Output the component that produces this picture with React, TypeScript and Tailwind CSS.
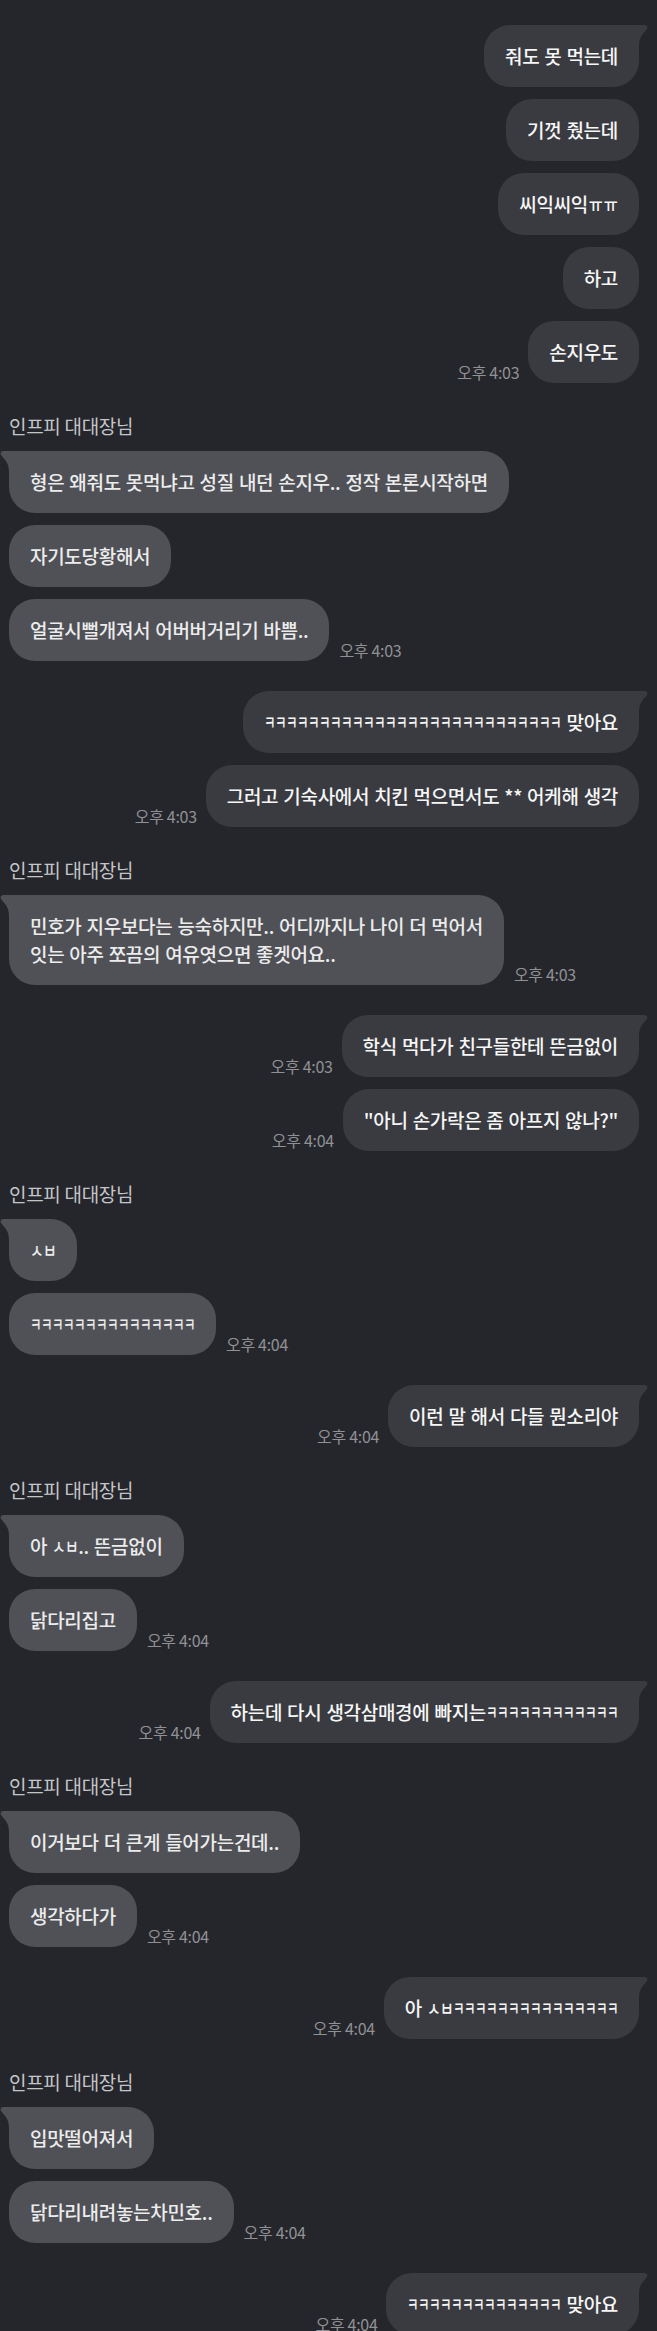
import React from "react";

type Msg = { text: string; time?: string };
type Group = { side: "left" | "right"; msgs: Msg[] };

const K = (n: number) => "ㅋ".repeat(n);

const groups: Group[] = [
  {
    side: "right",
    msgs: [
      { text: "줘도 못 먹는데" },
      { text: "기껏 줬는데" },
      { text: "씨익씨익ㅠㅠ" },
      { text: "하고" },
      { text: "손지우도", time: "오후 4:03" },
    ],
  },
  {
    side: "left",
    msgs: [
      { text: "형은 왜줘도 못먹냐고 성질 내던 손지우.. 정작 본론시작하면" },
      { text: "자기도당황해서" },
      { text: "얼굴시뻘개져서 어버버거리기 바쁨..", time: "오후 4:03" },
    ],
  },
  {
    side: "right",
    msgs: [
      { text: K(27) + " 맞아요" },
      { text: "그러고 기숙사에서 치킨 먹으면서도 ** 어케해 생각", time: "오후 4:03" },
    ],
  },
  {
    side: "left",
    msgs: [
      {
        text: "민호가 지우보다는 능숙하지만.. 어디까지나 나이 더 먹어서\n잇는 아주 쪼끔의 여유엿으면 좋겟어요..",
        time: "오후 4:03",
      },
    ],
  },
  {
    side: "right",
    msgs: [
      { text: "학식 먹다가 친구들한테 뜬금없이", time: "오후 4:03" },
      { text: "\"아니 손가락은 좀 아프지 않나?\"", time: "오후 4:04" },
    ],
  },
  {
    side: "left",
    msgs: [{ text: "ㅅㅂ" }, { text: K(15), time: "오후 4:04" }],
  },
  {
    side: "right",
    msgs: [{ text: "이런 말 해서 다들 뭔소리야", time: "오후 4:04" }],
  },
  {
    side: "left",
    msgs: [{ text: "아 ㅅㅂ.. 뜬금없이" }, { text: "닭다리집고", time: "오후 4:04" }],
  },
  {
    side: "right",
    msgs: [{ text: "하는데 다시 생각삼매경에 빠지는" + K(12), time: "오후 4:04" }],
  },
  {
    side: "left",
    msgs: [
      { text: "이거보다 더 큰게 들어가는건데.." },
      { text: "생각하다가", time: "오후 4:04" },
    ],
  },
  {
    side: "right",
    msgs: [{ text: "아 ㅅㅂ" + K(15), time: "오후 4:04" }],
  },
  {
    side: "left",
    msgs: [
      { text: "입맛떨어져서" },
      { text: "닭다리내려놓는차민호..", time: "오후 4:04" },
    ],
  },
  {
    side: "right",
    msgs: [{ text: K(14) + " 맞아요", time: "오후 4:04" }],
  },
];

function isJamo(ch: string) {
  const c = ch.charCodeAt(0);
  return c >= 0x3131 && c <= 0x318e;
}

function Jamo({ ch }: { ch: string }) {
  if (ch === "ㅋ") {
    return (
      <span className="inline-flex w-[11px] justify-center tracking-normal">
        <span className="inline-block scale-x-[0.66]">{ch}</span>
      </span>
    );
  }
  if (ch === "ㅠ") {
    return (
      <span className="inline-flex w-[15px] justify-center tracking-normal">
        <span className="inline-block scale-x-[0.8]">{ch}</span>
      </span>
    );
  }
  return (
    <span className="inline-flex w-[13px] justify-center tracking-normal">
      <span className="inline-block scale-x-[0.78]">{ch}</span>
    </span>
  );
}

function renderLine(line: string, keyBase: string) {
  const out: React.ReactNode[] = [];
  let buf = "";
  const flush = (i: number) => {
    if (buf) {
      out.push(<span key={keyBase + "t" + i}>{buf}</span>);
      buf = "";
    }
  };
  Array.from(line).forEach((ch, i) => {
    if (isJamo(ch)) {
      flush(i);
      out.push(<Jamo key={keyBase + "j" + i} ch={ch} />);
    } else {
      buf += ch;
    }
  });
  flush(9999);
  return out;
}

function renderText(text: string) {
  const lines = text.split("\n");
  return lines.map((l, i) => (
    <React.Fragment key={i}>
      {i > 0 && <br />}
      {renderLine(l, "l" + i)}
    </React.Fragment>
  ));
}

function Time({ t }: { t: string }) {
  return (
    <span className="mb-[1px] whitespace-nowrap text-[16px] leading-[20px] tracking-[-0.3px] text-[#909195]">
      {t}
    </span>
  );
}

function RightBubble({ text, tail }: { text: string; tail: boolean }) {
  return (
    <div
      className={
        "relative whitespace-nowrap rounded-tl-[26px] rounded-bl-[26px] rounded-br-[26px] bg-[#393b41] px-[21px] py-[17px] text-[19px] font-medium leading-[28px] tracking-[-0.3px] text-[#f6f6f6] [word-spacing:1px] " +
        (tail ? "rounded-tr-[0px]" : "rounded-tr-[26px]")
      }
    >
      {tail && (
        <svg
          className="absolute -right-[9px] top-0 h-[22px] w-[14px]"
          viewBox="0 0 14 22"
        >
          <path
            d="M0 0 H10 C12.6 0 14 1.6 13.2 3.6 C11 7.5 5 10.5 5 21 L0 21 Z"
            fill="#393b41"
          />
        </svg>
      )}
      <span className="relative">{renderText(text)}</span>
    </div>
  );
}

function LeftBubble({ text, tail }: { text: string; tail: boolean }) {
  return (
    <div
      className={
        "relative whitespace-nowrap rounded-tr-[26px] rounded-bl-[26px] rounded-br-[26px] bg-[#4f5157] px-[21px] py-[17px] text-[19px] font-medium leading-[28px] tracking-[-0.3px] text-[#ececec] [word-spacing:1px] " +
        (tail ? "rounded-tl-[0px]" : "rounded-tl-[26px]")
      }
    >
      {tail && (
        <svg
          className="absolute -left-[9px] top-0 h-[22px] w-[14px]"
          viewBox="0 0 14 22"
        >
          <path
            d="M14 0 H4 C1.4 0 0 1.6 0.8 3.6 C3 7.5 9 10.5 9 21 L14 21 Z"
            fill="#4f5157"
          />
        </svg>
      )}
      <span className="relative">{renderText(text)}</span>
    </div>
  );
}

function RightGroup({ msgs }: { msgs: Msg[] }) {
  return (
    <div className="flex flex-col items-end gap-3 pr-[18px]">
      {msgs.map((m, i) => (
        <div key={i} className="flex items-end gap-[9px]">
          {m.time && <Time t={m.time} />}
          <RightBubble text={m.text} tail={i === 0} />
        </div>
      ))}
    </div>
  );
}

function LeftGroup({ msgs }: { msgs: Msg[] }) {
  return (
    <div className="flex flex-col items-start gap-3 pl-[9px]">
      <div className="text-[19px] leading-[26px] tracking-[-0.3px] text-[#c4c5c8]">
        인프피 대대장님
      </div>
      {msgs.map((m, i) => (
        <div key={i} className="flex items-end gap-[10px]">
          <LeftBubble text={m.text} tail={i === 0} />
          {m.time && <Time t={m.time} />}
        </div>
      ))}
    </div>
  );
}

export default function App() {
  return (
    <div className="min-h-screen overflow-hidden bg-[#25262b] pb-10 pt-[25px] font-['Noto_Sans_CJK_KR','Noto_Sans',sans-serif]">
      <div className="flex flex-col gap-[30px]">
        {groups.map((g, i) =>
          g.side === "right" ? (
            <RightGroup key={i} msgs={g.msgs} />
          ) : (
            <LeftGroup key={i} msgs={g.msgs} />
          )
        )}
      </div>
    </div>
  );
}
